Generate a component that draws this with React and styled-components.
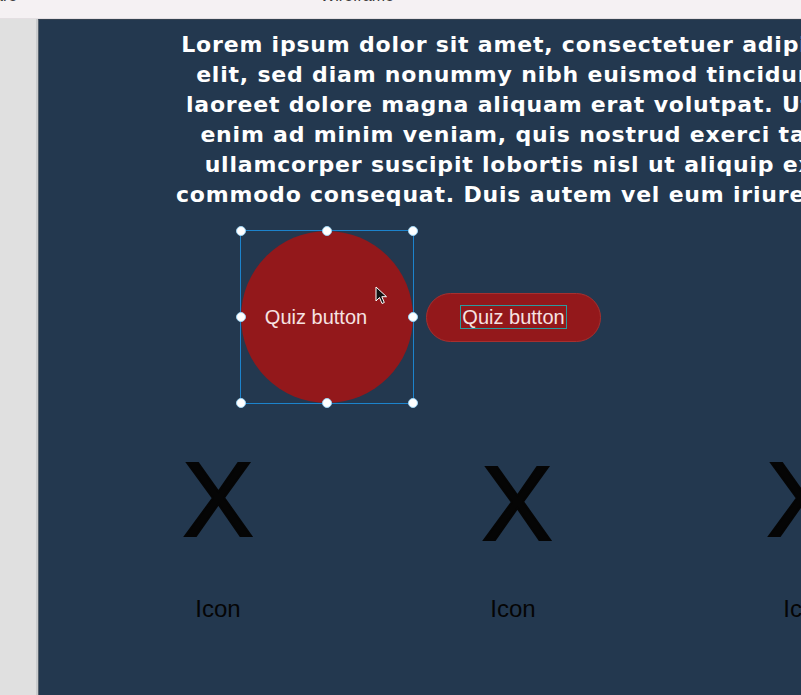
import styled, { createGlobalStyle } from "styled-components";

const GlobalStyle = createGlobalStyle`
    html, body {
        margin: 0;
        padding: 0;
        overflow: hidden;
        background: #e0e0e0;
    }
`;

const Window = styled.div`
    width: 801px;
    height: 695px;
    display: flex;
    flex-direction: column;
    overflow: hidden;
`;

const TitleBar = styled.div`
    height: 18px;
    flex-shrink: 0;
    display: flex;
    align-items: flex-start;
    background: #f5f1f3;
    border-bottom: 1px solid #e4dfe2;
    overflow: hidden;
    font-family: "Liberation Sans", Arial, sans-serif;
    font-size: 16px;
    line-height: 16px;
    color: #3a3a3a;
`;

const BarLabel = styled.span`
    margin-top: -12px;
    margin-left: ${(p) => p.$left}px;
    white-space: nowrap;
`;

const Workspace = styled.div`
    flex: 1;
    display: flex;
    min-height: 0;
`;

const Sidebar = styled.div`
    width: 36px;
    flex-shrink: 0;
    background: #e0e0e0;
    border-right: 2px solid #c9cbcd;
`;

const Canvas = styled.div`
    width: 980px;
    flex-shrink: 0;
    background: #23384f;
    border-left: 1px solid #56616d;
    border-top: 1px solid #34414f;
`;

const Paragraph = styled.p`
    margin: 0;
    padding-top: 10px;
    text-align: center;
    font-family: "DejaVu Sans", Verdana, sans-serif;
    font-weight: bold;
    font-size: 22px;
    letter-spacing: 0.8px;
    line-height: 30px;
    color: #ffffff;
    white-space: nowrap;
`;

const ButtonRow = styled.div`
    display: flex;
    align-items: center;
    gap: 13px;
    margin-top: 21px;
    padding-left: 202px;
`;

const Selection = styled.div`
    position: relative;
    outline: 1px solid #1c83cc;
`;

const Handle = styled.span`
    position: absolute;
    left: ${(p) => p.$x}%;
    top: ${(p) => p.$y}%;
    width: 8px;
    height: 8px;
    margin: -5px 0 0 -5px;
    border-radius: 50%;
    background: #ffffff;
    border: 1px solid #9fd3f2;
`;

const Cursor = styled.svg`
    position: absolute;
    left: 134px;
    top: 55px;
`;

const ButtonText = styled.span`
    font-family: "Liberation Sans", Arial, sans-serif;
    font-size: 20px;
    color: #f6e2e2;
`;

const CircleButton = styled.div`
    width: 172px;
    height: 172px;
    border-radius: 50%;
    background: #93181b;
    display: flex;
    align-items: center;
    justify-content: center;
    padding-right: 22px;
    box-sizing: border-box;
`;

const PillButton = styled.div`
    width: 175px;
    height: 49px;
    box-sizing: border-box;
    border-radius: 25px;
    background: #93181b;
    border: 1px solid #a6302f;
    display: flex;
    align-items: center;
    justify-content: center;
`;

const EditingText = styled(ButtonText)`
    outline: 1px solid #2a9c9f;
    line-height: 22px;
    padding: 0 1px;
`;

const IconGrid = styled.div`
    display: grid;
    grid-template-columns: 298px 300px 270px;
    margin-top: 43px;
    padding-left: 30px;
`;

const IconCell = styled.div`
    display: flex;
    flex-direction: column;
    align-items: center;
    font-family: "Liberation Sans", Arial, sans-serif;
    color: #050505;
`;

const Glyph = styled.div`
    font-size: 106px;
    line-height: 106px;
    -webkit-text-stroke: 2px #050505;
    margin-top: ${(p) => p.$shift || 0}px;
`;

const IconLabel = styled.div`
    font-size: 24px;
    line-height: 24px;
    margin-top: ${(p) => 45 - (p.$shift || 0)}px;
    margin-left: ${(p) => p.$nudge || 0}px;
`;

const handles = [
    [0, 0], [50, 0], [100, 0],
    [0, 50], [100, 50],
    [0, 100], [50, 100], [100, 100],
];

const icons = [
    { shift: 0, nudge: 0 },
    { shift: 4, nudge: -8 },
    { shift: 0, nudge: 8 },
];

const App = () => {
    return (
        <>
            <GlobalStyle />
            <Window>
                <TitleBar>
                    <BarLabel $left={-6}>are</BarLabel>
                    <BarLabel $left={303}>Wireframe</BarLabel>
                </TitleBar>
                <Workspace>
                    <Sidebar />
                    <Canvas>
                        <Paragraph>
                            Lorem ipsum dolor sit amet, consectetuer adipiscing<br />
                            elit, sed diam nonummy nibh euismod tincidunt ut<br />
                            laoreet dolore magna aliquam erat volutpat. Ut wisi<br />
                            enim ad minim veniam, quis nostrud exerci tation<br />
                            ullamcorper suscipit lobortis nisl ut aliquip ex ea<br />
                            commodo consequat. Duis autem vel eum iriure dolor
                        </Paragraph>
                        <ButtonRow>
                            <Selection>
                                <CircleButton>
                                    <ButtonText>Quiz button</ButtonText>
                                </CircleButton>
                                {handles.map(([x, y]) => (
                                    <Handle key={`${x}-${y}`} $x={x} $y={y} />
                                ))}
                                <Cursor width="14" height="20" viewBox="0 0 14 20">
                                    <path
                                        d="M1 1 L1 15 L4.5 11.5 L7 17.5 L9.3 16.5 L6.8 10.7 L11.5 10.7 Z"
                                        fill="#111"
                                        stroke="#fff"
                                        strokeWidth="1"
                                        strokeLinejoin="round"
                                    />
                                </Cursor>
                            </Selection>
                            <PillButton>
                                <EditingText>Quiz button</EditingText>
                            </PillButton>
                        </ButtonRow>
                        <IconGrid>
                            {icons.map((icon, i) => (
                                <IconCell key={i}>
                                    <Glyph $shift={icon.shift}>X</Glyph>
                                    <IconLabel $shift={icon.shift} $nudge={icon.nudge}>
                                        Icon
                                    </IconLabel>
                                </IconCell>
                            ))}
                        </IconGrid>
                    </Canvas>
                </Workspace>
            </Window>
        </>
    );
};

export default App;
